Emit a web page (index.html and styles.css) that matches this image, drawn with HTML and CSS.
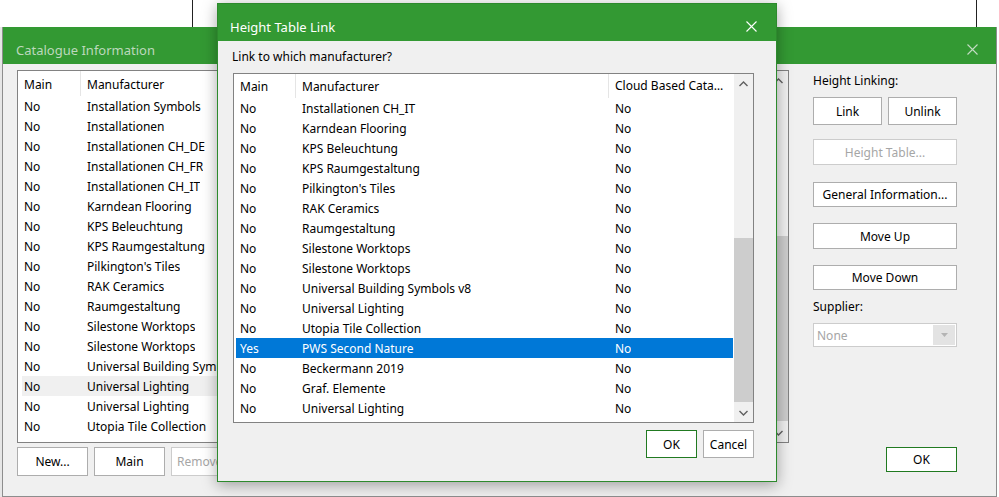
FILE: index.html
```html
<!DOCTYPE html>
<html lang="en">
<head>
    <meta charset="UTF-8">
    <title>Catalogue Information</title>
    <link rel="stylesheet" href="styles.css">
</head>
<body>
    <!-- window frame behind the dialogs -->
    <div class="backdrop"><div class="backdrop-frame"></div></div>

    <div class="window main-window">
        <div class="titlebar inactive">
            <span class="title">Catalogue Information</span>
            <svg class="close-icon" width="11" height="11" viewBox="0 0 11 11"><path d="M0.5 0.5L10.5 10.5M10.5 0.5L0.5 10.5"/></svg>
        </div>
        <div class="main-body">
            <div class="left-col">
                <div class="listview main-list">
                    <div class="list-inner">
                        <div class="list-header">
                            <span class="cell col-main">Main</span>
                            <span class="cell col-maker">Manufacturer</span>
                        </div>
                        <div class="row"><span class="cell col-main">No</span><span class="cell col-maker">Installation Symbols</span></div>
                        <div class="row"><span class="cell col-main">No</span><span class="cell col-maker">Installationen</span></div>
                        <div class="row"><span class="cell col-main">No</span><span class="cell col-maker">Installationen CH_DE</span></div>
                        <div class="row"><span class="cell col-main">No</span><span class="cell col-maker">Installationen CH_FR</span></div>
                        <div class="row"><span class="cell col-main">No</span><span class="cell col-maker">Installationen CH_IT</span></div>
                        <div class="row"><span class="cell col-main">No</span><span class="cell col-maker">Karndean Flooring</span></div>
                        <div class="row"><span class="cell col-main">No</span><span class="cell col-maker">KPS Beleuchtung</span></div>
                        <div class="row"><span class="cell col-main">No</span><span class="cell col-maker">KPS Raumgestaltung</span></div>
                        <div class="row"><span class="cell col-main">No</span><span class="cell col-maker">Pilkington's Tiles</span></div>
                        <div class="row"><span class="cell col-main">No</span><span class="cell col-maker">RAK Ceramics</span></div>
                        <div class="row"><span class="cell col-main">No</span><span class="cell col-maker">Raumgestaltung</span></div>
                        <div class="row"><span class="cell col-main">No</span><span class="cell col-maker">Silestone Worktops</span></div>
                        <div class="row"><span class="cell col-main">No</span><span class="cell col-maker">Silestone Worktops</span></div>
                        <div class="row"><span class="cell col-main">No</span><span class="cell col-maker">Universal Building Symbols v8</span></div>
                        <div class="row hover"><span class="cell col-main">No</span><span class="cell col-maker">Universal Lighting</span></div>
                        <div class="row"><span class="cell col-main">No</span><span class="cell col-maker">Universal Lighting</span></div>
                        <div class="row"><span class="cell col-main">No</span><span class="cell col-maker">Utopia Tile Collection</span></div>
                    </div>
                    <div class="scrollbar">
                        <div class="scroll-arrow"><svg width="9" height="6" viewBox="0 0 9 6"><path d="M0.5 5L4.5 1L8.5 5"/></svg></div>
                        <div class="scroll-track"><div class="scroll-thumb"></div></div>
                        <div class="scroll-arrow"><svg width="9" height="6" viewBox="0 0 9 6"><path d="M0.5 1L4.5 5L8.5 1"/></svg></div>
                    </div>
                </div>
                <div class="button-row">
                    <button class="btn btn-wide">New...</button>
                    <button class="btn btn-wide">Main</button>
                    <button class="btn btn-wide btn-remove" disabled>Remove</button>
                </div>
            </div>

            <div class="side-col">
                <div class="side-label">Height Linking:</div>
                <div class="link-row">
                    <button class="btn btn-link">Link</button>
                    <button class="btn btn-link">Unlink</button>
                </div>
                <button class="btn btn-side btn-table" disabled>Height Table...</button>
                <button class="btn btn-side btn-info">General Information...</button>
                <button class="btn btn-side btn-up">Move Up</button>
                <button class="btn btn-side btn-down">Move Down</button>
                <div class="side-label supplier-label">Supplier:</div>
                <div class="select disabled">
                    <span class="select-value">None</span>
                    <span class="select-arrow"><svg width="7" height="4" viewBox="0 0 7 4"><path d="M0 0H7L3.5 4Z"/></svg></span>
                </div>
                <button class="btn btn-default btn-ok-main">OK</button>
            </div>
        </div>
    </div>

    <!-- Height Table Link dialog sits over the main window -->
    <div class="window link-dialog">
        <div class="titlebar">
            <span class="title">Height Table Link</span>
            <svg class="close-icon" width="11" height="11" viewBox="0 0 11 11"><path d="M0.5 0.5L10.5 10.5M10.5 0.5L0.5 10.5"/></svg>
        </div>
        <div class="dialog-body">
            <div class="prompt">Link to which manufacturer?</div>
            <div class="listview link-list">
                <div class="list-inner">
                    <div class="list-header">
                        <span class="cell col-main">Main</span>
                        <span class="cell col-maker">Manufacturer</span>
                        <span class="cell col-cloud">Cloud Based Catalogues</span>
                    </div>
                    <div class="row"><span class="cell col-main">No</span><span class="cell col-maker">Installationen CH_IT</span><span class="cell col-cloud">No</span></div>
                    <div class="row"><span class="cell col-main">No</span><span class="cell col-maker">Karndean Flooring</span><span class="cell col-cloud">No</span></div>
                    <div class="row"><span class="cell col-main">No</span><span class="cell col-maker">KPS Beleuchtung</span><span class="cell col-cloud">No</span></div>
                    <div class="row"><span class="cell col-main">No</span><span class="cell col-maker">KPS Raumgestaltung</span><span class="cell col-cloud">No</span></div>
                    <div class="row"><span class="cell col-main">No</span><span class="cell col-maker">Pilkington's Tiles</span><span class="cell col-cloud">No</span></div>
                    <div class="row"><span class="cell col-main">No</span><span class="cell col-maker">RAK Ceramics</span><span class="cell col-cloud">No</span></div>
                    <div class="row"><span class="cell col-main">No</span><span class="cell col-maker">Raumgestaltung</span><span class="cell col-cloud">No</span></div>
                    <div class="row"><span class="cell col-main">No</span><span class="cell col-maker">Silestone Worktops</span><span class="cell col-cloud">No</span></div>
                    <div class="row"><span class="cell col-main">No</span><span class="cell col-maker">Silestone Worktops</span><span class="cell col-cloud">No</span></div>
                    <div class="row"><span class="cell col-main">No</span><span class="cell col-maker">Universal Building Symbols v8</span><span class="cell col-cloud">No</span></div>
                    <div class="row"><span class="cell col-main">No</span><span class="cell col-maker">Universal Lighting</span><span class="cell col-cloud">No</span></div>
                    <div class="row"><span class="cell col-main">No</span><span class="cell col-maker">Utopia Tile Collection</span><span class="cell col-cloud">No</span></div>
                    <div class="row selected"><span class="cell col-main">Yes</span><span class="cell col-maker">PWS Second Nature</span><span class="cell col-cloud">No</span></div>
                    <div class="row"><span class="cell col-main">No</span><span class="cell col-maker">Beckermann 2019</span><span class="cell col-cloud">No</span></div>
                    <div class="row"><span class="cell col-main">No</span><span class="cell col-maker">Graf. Elemente</span><span class="cell col-cloud">No</span></div>
                    <div class="row"><span class="cell col-main">No</span><span class="cell col-maker">Universal Lighting</span><span class="cell col-cloud">No</span></div>
                </div>
                <div class="scrollbar">
                    <div class="scroll-arrow"><svg width="9" height="6" viewBox="0 0 9 6"><path d="M0.5 5L4.5 1L8.5 5"/></svg></div>
                    <div class="scroll-track"><div class="scroll-thumb"></div></div>
                    <div class="scroll-arrow"><svg width="9" height="6" viewBox="0 0 9 6"><path d="M0.5 1L4.5 5L8.5 1"/></svg></div>
                </div>
            </div>
            <div class="dialog-buttons">
                <button class="btn btn-default btn-small">OK</button>
                <button class="btn btn-small">Cancel</button>
            </div>
        </div>
    </div>
</body>
</html>
```

FILE: styles.css
```css
/* Windows style dialogs */
body {
    margin: 0;
    width: 999px;
    height: 497px;
    overflow: hidden;
    position: relative;
    background-color: #fff;
    font-family: "Noto Sans", sans-serif;
    font-size: 12px;
    color: #000;
}

.backdrop {
    height: 27px;
    padding-left: 192px;
}

.backdrop-frame {
    width: 785px;
    height: 27px;
    box-sizing: border-box;
    border-left: 1px solid #222;
    border-right: 1px solid #222;
}

.window {
    box-sizing: border-box;
    background-color: #f0f0f0;
    display: flex;
    flex-direction: column;
}

.main-window {
    margin-left: 2px;
    width: 995px;
    height: 470px;
    border: 1px solid #8d8d8d;
    border-top: none;
    box-shadow: -2px 0 0 #e6e6e6;
}

.titlebar {
    height: 37px;
    box-sizing: border-box;
    flex-shrink: 0;
    background-color: #339933;
    display: flex;
    align-items: center;
    justify-content: space-between;
    padding: 8px 19px 0 13px;
    color: #fff;
    font-size: 13px;
}

.titlebar.inactive {
    color: #bcd8bc;
    padding-right: 18px;
}

.close-icon path {
    stroke: #fff;
    stroke-width: 1.1;
    fill: none;
}

.titlebar.inactive .close-icon path {
    stroke: #c4dcc4;
}

.main-body {
    display: flex;
    padding: 6px 0 0 14px;
}

/* list views */
.listview {
    box-sizing: border-box;
    border: 1px solid #828282;
    background-color: #fff;
    display: flex;
}

.list-inner {
    flex: 1;
    overflow: hidden;
}

.list-header {
    display: flex;
    height: 25px;
    align-items: stretch;
}

.list-header .cell {
    display: flex;
    align-items: center;
    box-sizing: border-box;
    padding-top: 2px;
    border-right: 1px solid #e5e5e5;
}

.row {
    display: flex;
    height: 20px;
    line-height: 18px;
}

.cell {
    white-space: nowrap;
    overflow: hidden;
    flex-shrink: 0;
}

.row .cell {
    padding-top: 2px;
}

.row.hover {
    background-color: #f0f0f0;
}

.row.selected {
    background-color: #0078d7;
    color: #fff;
}

.main-list {
    width: 772px;
    height: 373px;
}

.main-list .list-header .col-main {
    width: 63px;
    padding-left: 6px;
}

.main-list .list-header .col-maker {
    padding-left: 6px;
    width: 300px;
}

.main-list .row {
    margin-left: 4px;
}

.main-list .row .col-main {
    width: 59px;
    padding-left: 2px;
    box-sizing: border-box;
}

.main-list .row .col-maker {
    padding-left: 6px;
}

.link-list {
    margin-left: 1px;
    width: 521px;
    height: 350px;
}

.link-list .list-header {
    height: 24px;
}

.link-list .list-header .cell {
    padding-top: 0;
}

.link-list .list-header .col-main {
    width: 62px;
    padding-left: 6px;
}

.link-list .list-header .col-maker {
    width: 313px;
    padding-left: 6px;
}

.link-list .list-header .col-cloud {
    width: 117px;
    padding-left: 6px;
    border-right: none;
    overflow: hidden;
    text-overflow: ellipsis;
    display: block;
    line-height: 24px;
}

.link-list .row {
    margin: 0 1px 0 2px;
}

.link-list .row .col-main {
    width: 60px;
    padding-left: 4px;
    box-sizing: border-box;
}

.link-list .row .col-maker {
    width: 313px;
    padding-left: 6px;
    box-sizing: border-box;
}

.link-list .row .col-cloud {
    padding-left: 6px;
}

/* scrollbars */
.scrollbar {
    width: 19px;
    flex-shrink: 0;
    background-color: #f0f0f0;
    display: flex;
    flex-direction: column;
}

.scroll-arrow {
    height: 19px;
    display: flex;
    align-items: center;
    justify-content: center;
}

.scroll-arrow path {
    stroke: #606060;
    stroke-width: 1.4;
    fill: none;
}

.scroll-track {
    flex: 1;
}

.scroll-thumb {
    background-color: #cdcdcd;
}

.main-list .scroll-thumb {
    margin-top: 146px;
    height: 185px;
}

.link-list .scroll-thumb {
    margin-top: 145px;
    height: 164px;
}

/* buttons */
.btn {
    box-sizing: border-box;
    margin: 0;
    padding: 0;
    border: 1px solid #adadad;
    background-color: #fff;
    font-family: inherit;
    font-size: 12px;
    color: #000;
    display: flex;
    align-items: center;
    justify-content: center;
}

.btn:disabled {
    color: #a6a6a6;
    border-color: #cccccc;
}

.btn-default {
    border-color: #217a21;
}

.button-row {
    display: flex;
    gap: 6px;
    margin-top: 4px;
}

.btn-wide {
    width: 71px;
    height: 29px;
}

.btn-remove {
    justify-content: flex-start;
    padding-left: 5px;
}

.side-col {
    width: 144px;
    margin-left: 24px;
    display: flex;
    flex-direction: column;
}

.side-label {
    height: 20px;
    box-sizing: border-box;
    padding-top: 2px;
    line-height: 18px;
}

.link-row {
    display: flex;
    gap: 6px;
    margin-top: 7px;
}

.btn-link {
    width: 69px;
    height: 28px;
}

.btn-side {
    width: 144px;
}

.btn-table {
    margin-top: 14px;
    height: 26px;
}

.btn-info {
    margin-top: 17px;
    height: 25px;
}

.btn-up {
    margin-top: 16px;
    height: 26px;
}

.btn-down {
    margin-top: 16px;
    height: 25px;
}

.supplier-label {
    margin-top: 6px;
}

.select {
    margin-top: 7px;
    height: 24px;
    box-sizing: border-box;
    border: 1px solid #cccccc;
    background-color: #fff;
    display: flex;
    align-items: center;
    justify-content: space-between;
    padding: 0 1px 0 3px;
    color: #a6a6a6;
}

.select-arrow {
    width: 22px;
    height: 20px;
    background-color: #e3e3e3;
    display: flex;
    align-items: center;
    justify-content: center;
}

.select-arrow path {
    fill: #b4b4b4;
}

.btn-ok-main {
    margin-top: 100px;
    align-self: flex-end;
    width: 71px;
    height: 25px;
}

/* Height Table Link dialog */
.link-dialog {
    position: absolute;
    left: 217px;
    top: 3px;
    width: 560px;
    height: 479px;
    border: 1px solid #2d8a2d;
    box-shadow: 0 3px 14px rgba(0, 0, 0, 0.35);
}

.link-dialog .titlebar {
    height: 37px;
    padding-left: 12px;
}

.dialog-body {
    padding: 6px 0 0 14px;
}

.prompt {
    height: 16px;
    box-sizing: border-box;
    padding-top: 2px;
    line-height: 16px;
    margin-bottom: 10px;
}

.dialog-buttons {
    width: 522px;
    display: flex;
    justify-content: flex-end;
    gap: 6px;
    margin-top: 7px;
}

.btn-small {
    width: 51px;
    height: 28px;
}
```
